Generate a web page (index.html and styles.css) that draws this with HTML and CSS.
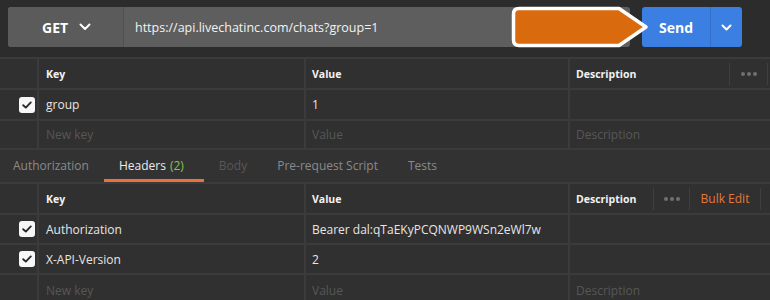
FILE: index.html
```html
<!DOCTYPE html>
<html lang="en">
<head>
<meta charset="utf-8">
<title>Request</title>
<link rel="stylesheet" href="styles.css">
</head>
<body>
<div class="page">
  <div class="topbar">
    <div class="reqfield">
      <div class="method">
        <span class="method-label">GET</span>
        <svg class="chev" width="12" height="8" viewBox="0 0 12 8"><polyline points="1.5,1.5 6,6 10.5,1.5" fill="none" stroke="#fff" stroke-width="2" stroke-linecap="round" stroke-linejoin="round"/></svg>
      </div>
      <div class="url">https://api.livechatinc.com/chats?group=1</div>
    </div>
    <div class="send">
      <span class="send-label">Send</span>
      <span class="send-drop"><svg width="11" height="7" viewBox="0 0 11 7"><polyline points="1.5,1.5 5.5,5.5 9.5,1.5" fill="none" stroke="#fff" stroke-width="2" stroke-linecap="round" stroke-linejoin="round"/></svg></span>
    </div>
    <svg class="pointer" width="140" height="42" viewBox="0 0 140 42">
      <path d="M8 2.5 H108 L135 21 L108 39.5 H8 Q2.5 39.5 2.5 34 V8 Q2.5 2.5 8 2.5 Z" fill="#da6a0e" stroke="#ffffff" stroke-width="3.5" stroke-linejoin="round"/>
    </svg>
  </div>

  <div class="kv kv-params">
    <div class="cell"></div>
    <div class="cell hdr">Key</div>
    <div class="cell hdr">Value</div>
    <div class="cell hdr hdr-desc">
      <span class="desc-label">Description</span>
      <span class="hdr-action act-dots1"><span class="dots"><i></i><i></i><i></i></span></span>
    </div>

    <div class="cell cb"><span class="check"><svg width="10" height="8" viewBox="0 0 10 8"><polyline points="1.2,4.2 3.8,6.6 8.8,1.4" fill="none" stroke="#2a2a2a" stroke-width="1.9" stroke-linecap="round" stroke-linejoin="round"/></svg></span></div>
    <div class="cell">group</div>
    <div class="cell">1</div>
    <div class="cell"></div>

    <div class="cell"></div>
    <div class="cell ph">New key</div>
    <div class="cell ph">Value</div>
    <div class="cell ph">Description</div>
  </div>

  <div class="tabs">
    <span class="tab">Authorization</span>
    <span class="tab active">Headers <span class="count">(2)</span></span>
    <span class="tab disabled">Body</span>
    <span class="tab">Pre-request Script</span>
    <span class="tab">Tests</span>
  </div>

  <div class="kv kv-headers">
    <div class="cell"></div>
    <div class="cell hdr">Key</div>
    <div class="cell hdr">Value</div>
    <div class="cell hdr hdr-desc hdr-desc2">
      <span class="desc-label">Description</span>
      <span class="hdr-action act-dots2"><span class="dots"><i></i><i></i><i></i></span></span>
      <span class="hdr-action act-bulk">Bulk Edit</span>
    </div>

    <div class="cell cb"><span class="check"><svg width="10" height="8" viewBox="0 0 10 8"><polyline points="1.2,4.2 3.8,6.6 8.8,1.4" fill="none" stroke="#2a2a2a" stroke-width="1.9" stroke-linecap="round" stroke-linejoin="round"/></svg></span></div>
    <div class="cell">Authorization</div>
    <div class="cell">Bearer dal:qTaEKyPCQNWP9WSn2eWl7w</div>
    <div class="cell"></div>

    <div class="cell cb"><span class="check"><svg width="10" height="8" viewBox="0 0 10 8"><polyline points="1.2,4.2 3.8,6.6 8.8,1.4" fill="none" stroke="#2a2a2a" stroke-width="1.9" stroke-linecap="round" stroke-linejoin="round"/></svg></span></div>
    <div class="cell">X-API-Version</div>
    <div class="cell">2</div>
    <div class="cell"></div>

    <div class="cell"></div>
    <div class="cell ph">New key</div>
    <div class="cell ph">Value</div>
    <div class="cell ph">Description</div>
  </div>
</div>
</body>
</html>
```
FILE: styles.css
```css
* { box-sizing: border-box; }
html, body { margin: 0; padding: 0; }
body {
  background: #2c2c2c;
  font-family: "Open Sans", "DejaVu Sans", sans-serif;
  color: #e6e6e6;
  width: 770px;
  height: 300px;
  overflow: hidden;
}
.page { position: relative; }

.topbar {
  position: relative;
  display: flex;
  gap: 12px;
  padding: 7px 28px 10px 8px;
  height: 57px;
  background: #2c2c2c;
}
.reqfield {
  flex: 1;
  display: flex;
  height: 40px;
  border-radius: 3px;
  overflow: hidden;
  background: #5e5e5e;
}
.method {
  width: 116px;
  display: flex;
  align-items: center;
  gap: 11px;
  padding-left: 34px;
  background: #5b5b5b;
  border-right: 1px solid #505050;
}
.method-label { font-weight: 700; font-size: 14px; color: #fff; }
.url {
  flex: 1;
  display: flex;
  align-items: center;
  padding-left: 11px;
  font-size: 12.5px;
  color: #f2f2f2;
}
.send {
  width: 100px;
  height: 40px;
  display: flex;
  background: #3b7fe3;
  border-radius: 3px;
}
.send-label {
  width: 69px;
  display: flex;
  align-items: center;
  justify-content: center;
  font-weight: 700;
  font-size: 14px;
  color: #fff;
  border-right: 1px solid #346fc6;
}
.send-drop {
  flex: 1;
  display: flex;
  align-items: center;
  justify-content: center;
}
.pointer {
  position: absolute;
  left: 511px;
  top: 6px;
}

.kv {
  display: grid;
  grid-template-columns: 37px 265px 262px 1fr;
  gap: 2px;
  background: #3b3b3b;
  padding-top: 2px;
}
.kv-params { grid-template-rows: 29px 29px 27px; }
.kv-headers { grid-template-rows: 29px 28px 28px 30px; }
.cell {
  background: #303030;
  display: flex;
  align-items: center;
  padding-left: 6px;
  font-size: 12px;
  color: #e6e6e6;
  white-space: nowrap;
  overflow: hidden;
}
.kv .cell:nth-child(4n+2) { padding-left: 7px; }
.hdr { font-weight: 700; font-size: 10.5px; color: #f2f2f2; }
.ph { color: #575757; }
.hdr-desc { padding-right: 2px; }
.hdr-desc2 { padding-right: 9px; }
.desc-label { flex: 1; }
.hdr-action {
  height: 22px;
  display: flex;
  align-items: center;
  justify-content: center;
  border-left: 1px solid #3f3f3f;
}
.hdr-action:last-child { border-right: 1px solid #3f3f3f; }
.act-dots1 { width: 39px; }
.act-dots2 { width: 36px; }
.act-bulk { width: 72px; font-weight: 400; font-size: 12px; color: #e2783a; }
.dots { display: flex; gap: 2px; }
.dots i { width: 4px; height: 4px; border-radius: 50%; background: #707070; display: block; }

.cb { justify-content: flex-end; padding-right: 2px; }
.check {
  width: 16px;
  height: 16px;
  background: #f7f7f7;
  border-radius: 3px;
  display: flex;
  align-items: center;
  justify-content: center;
}

.tabs {
  display: flex;
  height: 34px;
  background: #323232;
  border-top: 2px solid #3b3b3b;
}
.tab {
  display: flex;
  align-items: center;
  padding: 0 15px;
  font-size: 12px;
  color: #8a8a8a;
  border-bottom: 3px solid transparent;
  padding-top: 1px;
}
.tab:first-child { padding-left: 13px; }
.tab.active { color: #ececec; border-bottom-color: #e8743b; }
.tab.disabled { color: #585858; }
.count { color: #8bc34a; margin-left: 4px; margin-right: 5px; }
```
